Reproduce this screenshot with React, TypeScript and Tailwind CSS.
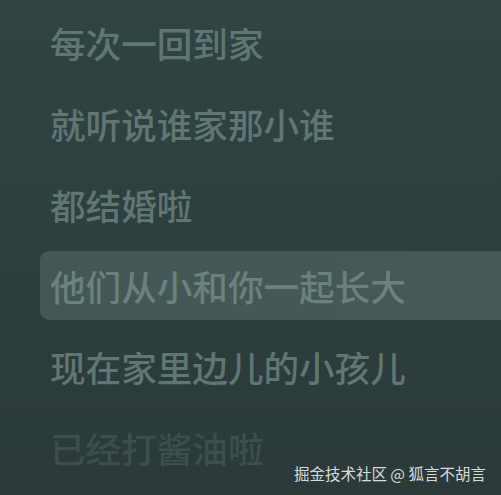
import React from 'react';

interface LyricLine {
  text: string;
  state: 'normal' | 'active' | 'faded';
}

const lines: LyricLine[] = [
  { text: '每次一回到家', state: 'normal' },
  { text: '就听说谁家那小谁', state: 'normal' },
  { text: '都结婚啦', state: 'normal' },
  { text: '他们从小和你一起长大', state: 'active' },
  { text: '现在家里边儿的小孩儿', state: 'normal' },
  { text: '已经打酱油啦', state: 'faded' },
];

const cjk = { fontFamily: '"Noto Sans CJK SC", "Noto Sans", sans-serif' };

export default function App() {
  return (
    <div
      className="relative h-[495px] w-[501px] overflow-hidden bg-gradient-to-b from-[#304443] to-[#2b3939]"
      style={cjk}
    >
      {/* Lyric list */}
      <div className="flex flex-col pt-[2px]">
        {lines.map((line) => (
          <div key={line.text} className="flex h-[81px] items-center">
            {line.state === 'active' ? (
              <div className="ml-[40px] flex h-[69px] flex-1 items-center rounded-l-[9px] bg-gradient-to-r from-[#445655] to-[#475957] pl-[10px]">
                <span className="text-[35.6px] font-medium leading-none text-[#6a817e]">
                  {line.text}
                </span>
              </div>
            ) : (
              <span
                className={`pl-[50px] text-[35.6px] font-medium leading-none ${
                  line.state === 'faded' ? 'text-[#3c4f4d]' : 'text-[#5f7673]'
                }`}
              >
                {line.text}
              </span>
            )}
          </div>
        ))}
      </div>

      {/* Watermark */}
      <span className="absolute bottom-[14px] right-[15px] text-[15.5px] leading-none text-[#d6dcdc]">
        掘金技术社区 @ 狐言不胡言
      </span>
    </div>
  );
}
